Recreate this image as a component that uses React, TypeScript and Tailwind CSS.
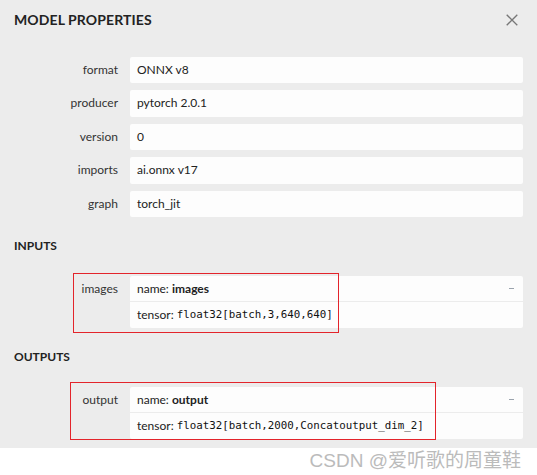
import React from 'react';

const properties = [
  { name: 'format', value: 'ONNX v8' },
  { name: 'producer', value: 'pytorch 2.0.1' },
  { name: 'version', value: '0' },
  { name: 'imports', value: 'ai.onnx v17' },
  { name: 'graph', value: 'torch_jit' }
];

const font = { fontFamily: 'Lato, "Noto Sans", sans-serif' };

function Argument({
  label,
  tensor,
  mark
}: {
  label: string;
  tensor: string;
  mark: string;
}) {
  return (
    <div className="relative grid grid-cols-[104px_1fr] gap-x-[12px]">
      <div className="text-right text-[12px] leading-[26px] text-[#333]">{label}</div>
      <div className="bg-[#fdfdfd] rounded-[2px] text-[12px] text-[#222]">
        <div className="flex items-center justify-between h-[26px] pl-[7px] pr-[9px] border-b border-[#ececec]">
          <span>
            name: <b className="font-bold">{label}</b>
          </span>
          <span className="w-[5px] h-px bg-[#9aa3ad]" />
        </div>
        <div className="flex items-center h-[26px] pl-[7px]">
          <span>tensor:&nbsp;</span>
          <code className="text-[10.8px] text-[#111]" style={{ fontFamily: '"DejaVu Sans Mono", monospace' }}>
            {tensor}
          </code>
        </div>
      </div>
      {/* red annotation from the screenshot */}
      <div className={`absolute border border-[#e3242b] pointer-events-none ${mark}`} />
    </div>
  );
}

export default function App() {
  return (
    <div className="w-[537px] h-[475px] bg-white" style={font}>
      <div className="bg-[#ececec] px-[14px] pb-[9px]">
        <div className="flex items-center justify-between h-[38px] pt-[1px]">
          <h1 className="text-[14px] font-bold text-[#222] tracking-[0.1px]">MODEL PROPERTIES</h1>
          <svg width="12" height="12" viewBox="0 0 12 12" className="mr-[5px]">
            <path d="M0.7 0.7 L11.3 11.3 M11.3 0.7 L0.7 11.3" stroke="#777" strokeWidth="1.3" fill="none" />
          </svg>
        </div>

        <div className="grid grid-cols-[104px_1fr] gap-x-[12px] gap-y-[7px] mt-[19px]">
          {properties.map((p) => (
            <React.Fragment key={p.name}>
              <div className="text-right text-[12px] leading-[26.4px] text-[#333]">{p.name}</div>
              <div className="bg-[#fdfdfd] rounded-[2px] h-[26.4px] leading-[26.4px] pl-[7px] text-[12px] text-[#222]">
                {p.value}
              </div>
            </React.Fragment>
          ))}
        </div>

        <h2 className="mt-[21px] text-[12px] leading-[16px] font-bold text-[#222]">INPUTS</h2>
        <div className="mt-[22px]">
          <Argument
            label="images"
            tensor="float32[batch,3,640,640]"
            mark="left-[58.7px] top-[-3px] w-[266px] h-[60px]"
          />
        </div>

        <h2 className="mt-[21px] text-[12px] leading-[16px] font-bold text-[#222]">OUTPUTS</h2>
        <div className="mt-[22px]">
          <Argument
            label="output"
            tensor="float32[batch,2000,Concatoutput_dim_2]"
            mark="left-[56px] top-[-5px] w-[366px] h-[58px]"
          />
        </div>
      </div>

      <div
        className="flex justify-end pr-[16px] pt-[1px] text-[19px] leading-[24px] text-[#bbbbbb]"
        style={{ fontFamily: '"Liberation Sans", "Noto Sans CJK SC", sans-serif' }}
      >
        CSDN @爱听歌的周童鞋
      </div>
    </div>
  );
}
